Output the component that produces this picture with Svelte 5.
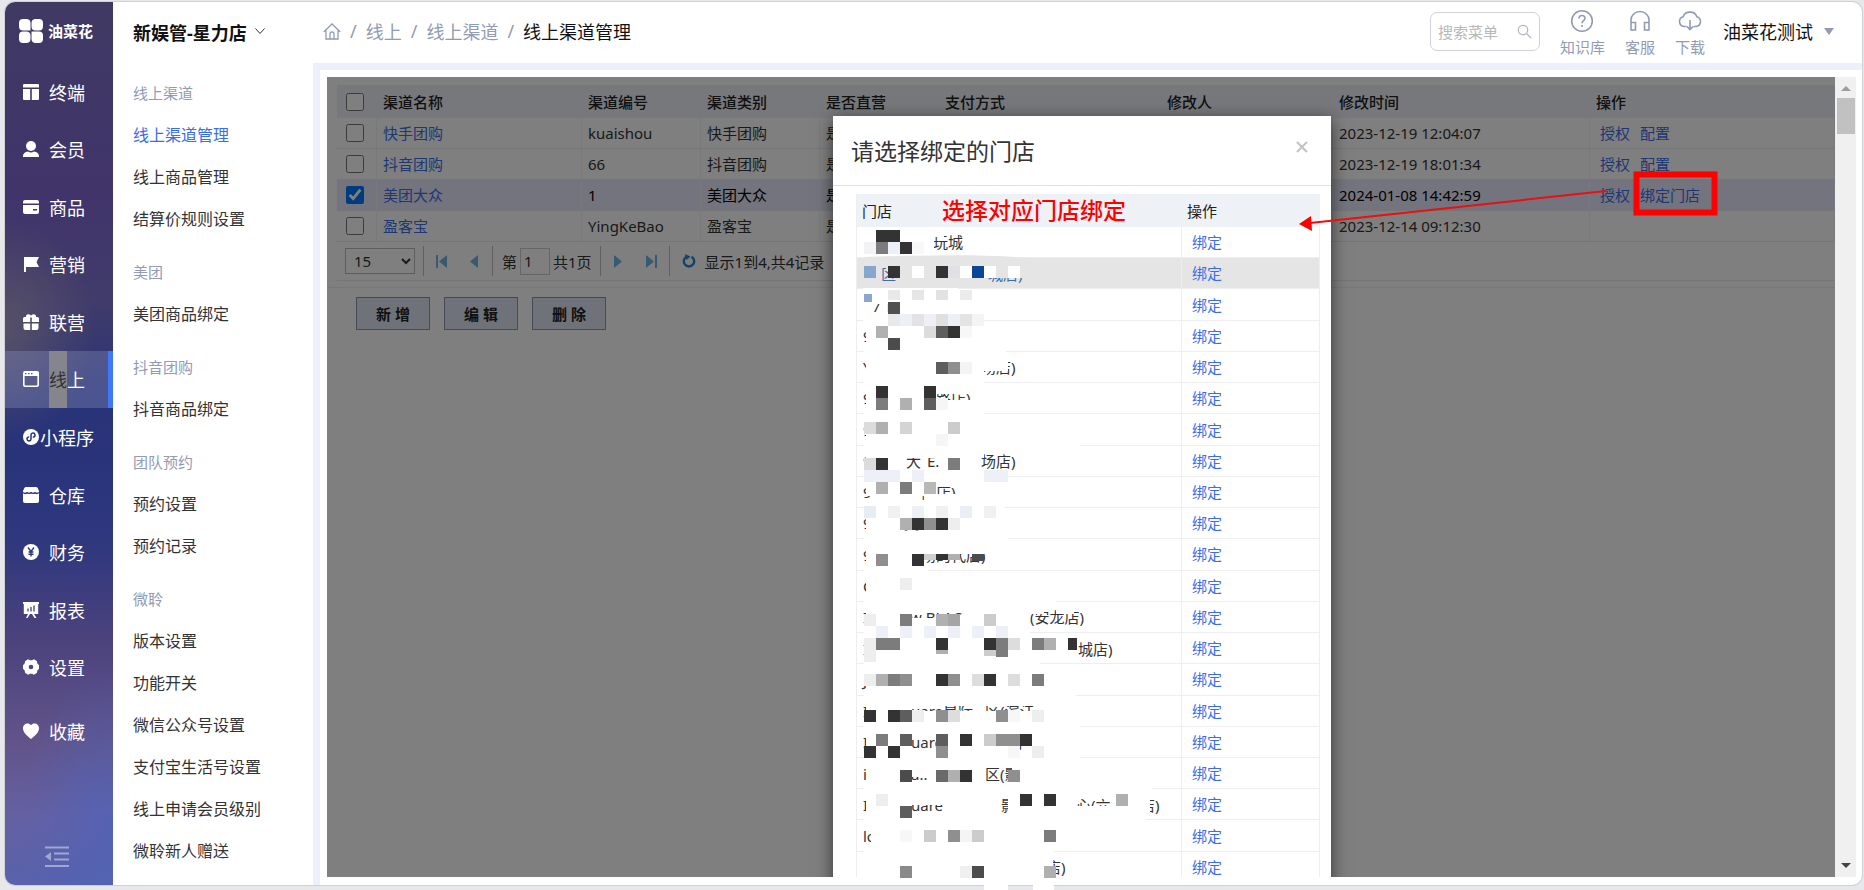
<script>
  const nav = [
    { id: 'terminal', label: '终端' },
    { id: 'member', label: '会员' },
    { id: 'goods', label: '商品' },
    { id: 'marketing', label: '营销' },
    { id: 'joint', label: '联营' },
    { id: 'online', label: '线上', active: true },
    { id: 'mini', label: '小程序' },
    { id: 'warehouse', label: '仓库' },
    { id: 'finance', label: '财务' },
    { id: 'report', label: '报表' },
    { id: 'setting', label: '设置' },
    { id: 'favorite', label: '收藏' }
  ];

  const groups = [
    { title: '线上渠道', items: ['线上渠道管理', '线上商品管理', '结算价规则设置'] },
    { title: '美团', items: ['美团商品绑定'] },
    { title: '抖音团购', items: ['抖音商品绑定'] },
    { title: '团队预约', items: ['预约设置', '预约记录'] },
    { title: '微聆', items: ['版本设置', '功能开关', '微信公众号设置', '支付宝生活号设置', '线上申请会员级别', '微聆新人赠送'] }
  ];

  const headers = ['渠道名称', '渠道编号', '渠道类别', '是否直营', '支付方式', '修改人', '修改时间', '操作'];
  const channels = [
    { name: '快手团购', code: 'kuaishou', type: '快手团购', time: '2023-12-19 12:04:07', ops: ['授权', '配置'] },
    { name: '抖音团购', code: '66', type: '抖音团购', time: '2023-12-19 18:01:34', ops: ['授权', '配置'] },
    { name: '美团大众', code: '1', type: '美团大众', time: '2024-01-08 14:42:59', ops: ['授权', '绑定门店'], checked: true },
    { name: '盈客宝', code: 'YingKeBao', type: '盈客宝', time: '2023-12-14 09:12:30', ops: [] }
  ];

  const stores = Array.from({ length: 21 }, (_, i) => i);

  // Visible pieces of the store names: x, baseline, text
  const fragments = [
    [933, 248, '玩城'],
    [881, 280, '区', '#3d6db0'],
    [988, 280, '城店)', '#3d6db0'],
    [872, 312, "7 T"],
    [863, 342, '9'],
    [863, 373, 'Y'],
    [981, 373, '场店)'],
    [863, 404, '9'],
    [936, 404, '路店)'],
    [863, 436, '9'],
    [863, 467, '9'],
    [906, 467, '大'],
    [927, 467, 'E.'],
    [981, 467, '场店)'],
    [863, 498, '9'],
    [921, 498, '商店)'],
    [863, 529, '9'],
    [904, 529, '莫'],
    [863, 561, '9'],
    [921, 561, '场的代店)'],
    [863, 592, 'C'],
    [863, 623, 'I'],
    [910, 623, 'w BLAC'],
    [1030, 623, '(安龙店)'],
    [863, 655, 'I'],
    [1078, 655, '城店)'],
    [863, 686, 'J'],
    [863, 717, 'I'],
    [911, 717, 'uare星际'],
    [985, 717, '区(滨江'],
    [863, 748, 'I'],
    [911, 748, 'uare'],
    [1008, 748, '店'],
    [863, 780, 'i'],
    [911, 780, 'a..'],
    [985, 780, '区(影'],
    [863, 811, 'I'],
    [911, 811, 'uare'],
    [1001, 811, '影'],
    [1076, 811, '心(六'],
    [1140, 811, '店)'],
    [863, 842, 'lo'],
    [940, 842, "'"],
    [1046, 873, '店)']
  ];

  // Erased areas: x, y, width, height
  const erased = [
    [863, 231, 71, 24], [930, 231, 14, 6],
    [886, 266, 50, 5], [984, 262, 50, 16],
    [863, 288, 95, 9], [863, 300, 160, 4], [863, 315, 120, 12], [866, 327, 140, 24],
    [864, 349, 142, 8], [866, 360, 118, 18], [984, 358, 24, 13], [864, 380, 120, 7],
    [866, 387, 70, 24], [936, 386, 40, 8], [936, 400, 50, 12], [864, 412, 120, 10],
    [866, 422, 130, 20], [864, 442, 216, 9], [866, 452, 118, 6], [866, 458, 38, 12], [864, 470, 140, 12],
    [866, 482, 60, 14], [924, 482, 30, 5], [924, 494, 40, 8], [864, 502, 140, 16], [866, 518, 36, 14],
    [864, 531, 144, 10], [866, 542, 60, 24], [926, 542, 60, 12], [864, 566, 64, 8],
    [866, 574, 60, 24], [864, 598, 192, 8], [866, 606, 44, 24], [910, 618, 120, 10],
    [1030, 606, 14, 8], [1056, 606, 18, 8], [864, 626, 166, 12], [866, 638, 210, 22],
    [864, 661, 176, 8], [867, 669, 210, 26], [864, 691, 212, 8], [866, 699, 46, 22],
    [911, 699, 130, 7], [911, 711, 150, 12], [864, 723, 216, 10], [866, 733, 44, 26], [936, 733, 70, 26],
    [864, 755, 216, 8], [866, 763, 44, 24], [911, 763, 40, 14], [1012, 763, 20, 24],
    [864, 786, 288, 8], [866, 794, 44, 24], [911, 794, 40, 11], [950, 794, 50, 24],
    [1008, 794, 68, 24], [1076, 794, 64, 5], [1076, 806, 64, 12], [1140, 794, 10, 24],
    [864, 818, 282, 8], [871, 826, 200, 22], [864, 848, 190, 12], [863, 860, 190, 18],
    [984, 884, 24, 6], [1033, 884, 21, 6]
  ];

  // Mosaic tiles on a 12px grid: top edge, then [column, shade, height]
  const tint = '#edf0f7';
  const mosaic = [
    [230, [[1, '#333'], [2, '#333']]],
    [242, [[0, '#f3f3f5'], [1, '#7c7c7c'], [2, tint], [3, '#333'], [4, '#f8f8f8']]],
    [266, [[0, '#86a6cc'], [2, '#333'], [4, '#fff'], [6, '#333'], [7, '#dfe1e4'], [8, '#fff'], [9, '#0b4595'], [10, '#fff'], [12, '#fff']]],
    [290, [[2, '#e9e9e9'], [4, '#e6e6e6'], [6, '#e2e2e2'], [8, '#ebebeb']]],
    [302, [[2, '#505050']]],
    [314, [[2, '#e9e9ec'], [3, tint], [4, '#e3e3e6'], [5, tint], [6, '#e0e0e3'], [7, tint], [8, '#e4e4e6'], [9, '#f4f4f5']]],
    [326, [[1, '#b1b1b1'], [5, '#dcdcdc'], [6, '#5e5e5e'], [7, '#333'], [8, '#f7f7f7']]],
    [338, [[2, '#4c4c4c']]],
    [362, [[6, '#5e5e5e'], [7, '#8f8f8f'], [8, '#f4f4f4']]],
    [386, [[1, '#333'], [5, '#333']]],
    [398, [[1, '#7c7c7c'], [3, '#b0b0b0'], [5, '#5e5e5e'], [6, '#f6f6f6']]],
    [422, [[0, '#dcdcdc'], [1, '#b0b0b0'], [3, '#d4d4d4'], [7, '#ccc']]],
    [434, [[6, '#f6f6f6']]],
    [458, [[0, '#dcdcdc'], [1, '#333'], [7, '#7c7c7c']]],
    [470, [[0, tint], [1, tint], [2, tint], [4, tint], [10, tint], [11, tint]]],
    [482, [[1, '#b0b0b0'], [3, '#7c7c7c'], [5, '#b8b8b8']]],
    [506, [[0, '#e8ecf5'], [2, '#f1f1f4'], [4, tint], [6, '#f1f1f4'], [8, '#e9eef7'], [10, '#f1f1f4']]],
    [518, [[3, '#b0b0b0'], [4, '#333'], [5, '#8f8f8f'], [6, '#333'], [7, '#eee']]],
    [554, [[1, '#8f8f8f'], [4, '#333'], [5, '#d0d0d0', 6], [6, '#333', 6], [7, '#b0b0b0', 6], [9, '#4c4c4c', 7]]],
    [578, [[3, '#eee']]],
    [614, [[0, '#eee'], [3, '#7c7c7c'], [6, '#b0b0b0'], [7, '#a5a5a5'], [10, '#ccc']]],
    [626, [[1, tint], [3, tint], [5, tint], [7, tint], [9, tint], [11, tint]]],
    [638, [[0, '#eee'], [1, '#7c7c7c'], [2, '#7c7c7c'], [6, '#333'], [10, '#333'], [11, '#7c7c7c'], [12, '#ddd'], [14, '#7c7c7c'], [15, '#b0b0b0'], [17, '#333']]],
    [650, [[0, '#eee'], [6, '#b0b0b0', 4], [10, '#ccc', 6], [11, '#7c7c7c', 7]]],
    [674, [[0, '#eee'], [1, '#b0b0b0'], [2, '#7c7c7c'], [3, '#8f8f8f'], [6, '#333'], [7, '#8f8f8f'], [9, '#ddd'], [10, '#333'], [12, '#ddd'], [14, '#7c7c7c']]],
    [710, [[0, '#333'], [2, '#333'], [3, '#5e5e5e'], [4, '#eee'], [6, '#8f8f8f'], [7, '#ddd'], [11, '#8f8f8f'], [12, '#f7f7f7'], [14, '#eee']]],
    [734, [[1, '#7c7c7c'], [3, '#5e5e5e'], [6, '#5e5e5e'], [8, '#333'], [10, '#ccc'], [11, '#8f8f8f'], [12, '#8f8f8f'], [13, '#333']]],
    [746, [[0, '#333'], [2, '#333'], [6, '#8f8f8f'], [12, '#f7f7f7'], [14, '#eee']]],
    [770, [[3, '#4c4c4c'], [6, '#6a6a6a'], [7, '#b0b0b0'], [8, '#333'], [12, '#8f8f8f']]],
    [794, [[1, '#eee'], [13, '#333'], [15, '#333'], [21, '#b0b0b0']]],
    [806, [[3, '#5e5e5e']]],
    [830, [[3, '#f7f7f7'], [5, '#ccc'], [7, '#8f8f8f'], [8, '#f4f4f4'], [9, '#ccc'], [15, '#7c7c7c']]],
    [866, [[3, '#8a8a8a'], [8, '#f0f0f0'], [9, '#4c4c4c'], [15, '#b0b0b0', 12]]]
  ];
</script>

{#snippet navIcon(id)}
  <svg class="nav-icon" viewBox="0 0 16 16" fill="#fff" aria-hidden="true">
    {#if id === 'terminal'}
      <path d="M1 0h14a1 1 0 0 1 1 1v2.600H0V1a1 1 0 0 1 1-1zM0 5h7.200v11H1a1 1 0 0 1-1-1zM8.800 5H16v10a1 1 0 0 1-1 1H8.800z" />
    {:else if id === 'member'}
      <circle cx="8" cy="5" r="5" /><path d="M0 16c0-4 2-5 5-5.500 2 1.200 4 1.200 6 0 3 .5 5 1.500 5 5.500z" />
    {:else if id === 'goods'}
      <path d="M2 1h12a2 2 0 0 1 2 2v1.400H0V3a2 2 0 0 1 2-2zM0 6h16v7a2 2 0 0 1-2 2H2a2 2 0 0 1-2-2zm10 4v1.500h4V10z" fill-rule="evenodd" />
    {:else if id === 'marketing'}
      <path d="M1 1h15l-2.500 5 2.500 5H3v5H1z" />
    {:else if id === 'joint'}
      <path d="M3 3c-.5-2 1.500-3.500 3.500-2.500L8 1.500 9.500.5c2-1 4 .5 3.500 2.500h1.500A1.500 1.500 0 0 1 16 4.500V8H8.800V3.500H7.200V8H0V4.500A1.500 1.500 0 0 1 1.500 3zM.5 9.500h6.700V16H2.500a2 2 0 0 1-2-2zM8.800 9.500h6.700V14a2 2 0 0 1-2 2H8.800z" />
    {:else if id === 'online'}
      <path d="M2 0h12a2 2 0 0 1 2 2v12a2 2 0 0 1-2 2H2a2 2 0 0 1-2-2V2a2 2 0 0 1 2-2zM1.600 5v8.400a1 1 0 0 0 1 1h10.800a1 1 0 0 0 1-1V5zM2 2v1.300h1.500V2zm3 0v1.300h1.500V2zm3 0v1.300h1.500V2z" fill-rule="evenodd" />
    {:else if id === 'mini'}
      <circle cx="8" cy="8" r="8" />
      <path d="M8 10V6a2 2 0 1 1 2.400 2M8 6v4a2 2 0 1 1-2.400-2" fill="none" stroke="#28347a" stroke-width="1.500" stroke-linecap="round" />
    {:else if id === 'warehouse'}
      <path d="M3 0h10a2 2 0 0 1 1.700 1L16 4v10a2 2 0 0 1-2 2H2a2 2 0 0 1-2-2V4l1.300-3A2 2 0 0 1 3 0z" />
      <path d="M0 5.500c1.500 1.500 3 1 4 0 1.500 1.300 2.800 1.300 4 0 1.500 1.300 2.800 1.300 4 0 1 1 2.500 1.500 4 0" fill="none" stroke="#2b367b" stroke-width="1.200" />
    {:else if id === 'finance'}
      <circle cx="8" cy="8" r="8" />
      <path d="M5 3.500l3 4 3-4M8 7.500v5M5.500 8h5M5.500 10.300h5" fill="none" stroke="#30387e" stroke-width="1.400" />
    {:else if id === 'report'}
      <path d="M0 0h16v2h-.8v10H.8V2H0zM5 12l2 0-2.500 4H3zM9 12l2 0 2.500 4H11.500z" />
      <path d="M5 6.500v3M8 5v4.500M11 3.500v6" stroke="#40407a" stroke-width="1.300" />
    {:else if id === 'setting'}
      <path d="M5 .3l2 1h2l2-1 3 2 .2 2L16 6.300v3.400l-1.800 2-.2 2-3 2-2-1H7l-2 1-3-2-.2-2L0 9.700V6.300l1.800-2 .2-2z" />
      <circle cx="8" cy="8" r="2.300" fill="#50467d" />
    {:else}
      <path d="M8 16C4 13 0 9.500 0 5.300 0 .5 5.500-1 8 2.300 10.500-1 16 .5 16 5.300 16 9.500 12 13 8 16z" />
    {/if}
  </svg>
{/snippet}

<div class="page">
  <div class="frame">
    <aside class="sidebar">
      <div class="logo">
        <svg viewBox="0 0 24 24" fill="#fff" aria-hidden="true">
          <path d="M4 0h4a4 4 0 0 1 3.500 4v7.500H4A4 4 0 0 1 0 8V4a4 4 0 0 1 4-4zM16 0h4a4 4 0 0 1 4 4v4a4 4 0 0 1-4 3.500h-3.500a4 4 0 0 1-4-4V4A4 4 0 0 1 16 0zM4 12.500h4a4 4 0 0 1 3.500 4V20A4 4 0 0 1 8 24H4a4 4 0 0 1-4-4v-3.500a4 4 0 0 1 4-4zM12.500 12.500H20a4 4 0 0 1 4 4V20a4 4 0 0 1-4 4h-4a4 4 0 0 1-3.500-4z" />
        </svg>
        <b>油菜花</b>
      </div>
      <nav class="nav">
        {#each nav as item}
          <a href="#{item.id}" class:active={item.active}>
            {@render navIcon(item.id)}
            <span>{#if item.active}<mark>线</mark>上{:else}{item.label}{/if}</span>
          </a>
        {/each}
      </nav>
      <button class="fold" aria-label="收起菜单">
        <svg viewBox="0 0 24 22" fill="none" stroke="#9fa6d2" stroke-width="2" aria-hidden="true">
          <path d="M0 1.500h24M9 7.500h15M9 13.500h15M0 20h24" /><path d="M6 6v9L0 10.500z" fill="#9fa6d2" stroke="none" />
        </svg>
      </button>
    </aside>

    <div class="submenu">
      <button class="shop">新娱管-星力店
        <svg viewBox="0 0 10 7" fill="none" stroke="#333" aria-hidden="true"><path d="M.5.5l4.500 5 4.500-5" /></svg>
      </button>
      {#each groups as group}
        <section>
          <h2>{group.title}</h2>
          {#each group.items as item}
            <a href="#menu" class:current={item === '线上渠道管理'}>{item}</a>
          {/each}
        </section>
      {/each}
    </div>

    <div class="main">
      <header>
        <nav class="crumbs" aria-label="breadcrumb">
          <svg viewBox="0 0 18 17" fill="none" stroke="#929bb3" stroke-width="1.300" aria-hidden="true">
            <path d="M.7 9L9 1l8.300 8M3 7.500v8.500h12V7.500M7 16v-5a2 2 0 0 1 4 0v5" />
          </svg>
          <i>/</i><a href="#online">线上</a><i>/</i><a href="#channel">线上渠道</a><i>/</i><b>线上渠道管理</b>
        </nav>
        <label class="search">
          <input type="text" placeholder="搜索菜单" aria-label="搜索菜单" />
          <svg viewBox="0 0 15 15" fill="none" stroke="#b4b7bf" stroke-width="1.300" aria-hidden="true"><circle cx="6" cy="6" r="4.700" /><path d="M9.500 9.500l4.500 4.500" /></svg>
        </label>
        <div class="tools">
          <a href="#help">
            <svg viewBox="0 0 24 24" fill="none" stroke="#929bb3" stroke-width="1.600" aria-hidden="true"><circle cx="12" cy="12" r="10.300" /><path d="M9 9.500c0-4 6-4 6-.3 0 2.300-3 2.500-3 5M12 16v2" /></svg>
            知识库</a>
          <a href="#service">
            <svg viewBox="0 0 24 24" fill="none" stroke="#929bb3" stroke-width="1.600" aria-hidden="true"><path d="M3 20.500V11a9 8.500 0 0 1 18 0v9.500M3 13.500h4.500v7.500H3zM16.500 13.500H21v7.500h-4.500z" /></svg>
            客服</a>
          <a href="#download">
            <svg viewBox="0 0 24 24" fill="none" stroke="#929bb3" stroke-width="1.600" aria-hidden="true"><path d="M8.500 17.500H6a5 5 0 0 1-.8-9.800 7 6 0 0 1 13.600 0A5 5 0 0 1 18 17.500h-2.500M12 11v9.500M9 17.500l3 3 3-3" /></svg>
            下载</a>
        </div>
        <button class="user">油菜花测试<svg viewBox="0 0 10 7" aria-hidden="true"><path d="M0 0h10L5 7z" fill="#929bb3" /></svg></button>
      </header>

      <div class="content">
        <div class="workspace">
          <table class="channels">
            <colgroup><col class="c0" /><col class="c1" /><col class="c2" /><col class="c2" /><col class="c2" /><col class="c3" /><col class="c4" /><col class="c5" /><col /></colgroup>
            <thead>
              <tr><th><input type="checkbox" aria-label="全选" /></th>{#each headers as h}<th>{h}</th>{/each}</tr>
            </thead>
            <tbody>
              {#each channels as c}
                <tr class:selected={c.checked}>
                  <td><input type="checkbox" checked={c.checked} aria-label={c.name} /></td>
                  <td><a href="#edit">{c.name}</a></td>
                  <td>{c.code}</td><td>{c.type}</td><td>是</td><td></td><td></td><td>{c.time}</td>
                  <td><div class="ops">{#each c.ops as op}<a href="#op">{op}</a>{/each}</div></td>
                </tr>
              {/each}
            </tbody>
          </table>
          <div class="pager">
            <select aria-label="每页条数"><option>15</option></select>
            <span class="steps">
              <svg viewBox="0 0 11 13" aria-hidden="true"><path d="M0 0h2v13H0zM11 0v13L3 6.500z" /></svg>
              <svg viewBox="0 0 11 13" aria-hidden="true"><path d="M9 0v13L1 6.500z" /></svg>
            </span>
            <label class="pageno">第<input type="text" value="1" />共1页</label>
            <span class="steps next">
              <svg viewBox="0 0 11 13" aria-hidden="true"><path d="M1 0v13l8-6.500z" /></svg>
              <svg viewBox="0 0 11 13" aria-hidden="true"><path d="M9 0h2v13H9zM0 0v13l8-6.500z" /></svg>
            </span>
            <svg class="refresh" viewBox="0 0 14 14" fill="none" stroke="#2b87d0" stroke-width="2.400" aria-hidden="true"><path d="M9.500 2.700a5.200 5.200 0 1 1-5 0" /><path d="M3 0l5.500 2.400L4.500 6z" fill="#2b87d0" stroke="none" /></svg>
            显示1到4,共4记录
          </div>
          <div class="actions"><button>新 增</button><button>编 辑</button><button>删 除</button></div>

          <div class="shade"></div>

          <div class="dialog" role="dialog" aria-label="请选择绑定的门店">
            <div class="dialog-head">
              <h1>请选择绑定的门店</h1>
              <button aria-label="关闭"><svg viewBox="0 0 12 12" stroke="#c4c4c4" stroke-width="2.200" aria-hidden="true"><path d="M1 1l10 10M11 1L1 11" /></svg></button>
            </div>
            <table class="stores">
              <colgroup><col class="name" /><col /></colgroup>
              <thead><tr><th>门店</th><th>操作</th></tr></thead>
              <tbody>
                {#each stores as i}
                  <tr class:hover={i === 1}><td></td><td><a href="#bind">绑定</a></td></tr>
                {/each}
              </tbody>
            </table>
          </div>
        </div>
        <div class="scrollbar">
          <svg viewBox="0 0 10 5" aria-hidden="true"><path d="M0 5h10L5 0z" fill="#9c9c9c" /></svg>
          <i></i>
          <svg class="down" viewBox="0 0 10 5" aria-hidden="true"><path d="M0 0h10L5 5z" fill="#444" /></svg>
        </div>
      </div>
    </div>
  </div>

  <svg class="notes">
    {#each fragments as [x, y, text, color]}
      <text {x} {y} fill={color ?? '#333'}>{text}</text>
    {/each}
    {#each erased as [x, y, w, h]}
      <rect {x} {y} width={w} height={h} fill={y > 255 && y < 280 ? '#e5e5e5' : '#fff'} />
    {/each}
    <path d="M864 258v-1c60-2 120-3 164 1z" fill="#e5e5e5" />
    {#each mosaic as [y, tiles]}
      {#each tiles as [k, fill, h]}
        <rect x={864 + k * 12} {y} width={k === 17 ? 9 : 12} height={h ?? (y === 290 ? 10 : 12)} {fill} />
      {/each}
    {/each}
    <rect x="864" y="294" width="8" height="8" fill="#8ba7cc" />
    <text class="tip" x="942" y="219">选择对应门店绑定</text>
    <rect x="1636.500" y="174.500" width="78" height="38" fill="none" stroke="#fe0000" stroke-width="6" />
    <path d="M1606 191L1310 223" stroke="#e8110f" stroke-width="2" />
    <path d="M1299 224l12-8 1 15z" fill="#fe0000" />
  </svg>
</div>

<style>
  :global(body) { background: #e6e8eb; overflow: hidden; }
  .page {
    position: relative; box-sizing: border-box; height: 100vh; padding: 2px 2px 5px 5px;
    font-family: "Noto Sans", "Noto Sans CJK SC", sans-serif; font-size: 15px; color: #333;
  }
  a { text-decoration: none; color: inherit; }
  button { font: inherit; color: inherit; border: 0; background: none; padding: 0; }
  svg { display: block; flex: none; }
  .frame { display: flex; height: 100%; border-radius: 10px; overflow: hidden; background: #fff; box-shadow: 0 0 0 1px #cfd1d4; }

  .sidebar {
    width: 108px; flex: none; display: flex; flex-direction: column; color: #fff;
    background:
      radial-gradient(ellipse 90px 160px at 100% 93%, rgba(75, 100, 190, .6), transparent),
      radial-gradient(ellipse 90px 110px at 0 37%, rgba(96, 88, 104, .75), transparent),
      linear-gradient(#3f3963 0, #41346a 22%, #403c6a 34%, #2a3377 44%, #28347a 52%, #30387e 62%, #4b427c 72%, #62548a 84%, #6560a2 92%, #5862ac 100%);
  }
  .logo { display: flex; align-items: center; gap: 5px; height: 61px; padding: 0 0 3px 14px; padding-bottom: 3px; box-sizing: border-box; }
  .logo svg { width: 24px; height: 24px; margin-bottom: 3px; margin-top: 3px; margin-top: 3px; }
  .logo b { font-size: 15px; line-height: 24px; }
  .logo { padding-bottom: 4px; }
  .nav { display: grid; grid-template-rows: repeat(11, 1fr) 69px; height: 702px; font-size: 18px; }
  .nav a { display: flex; align-items: center; padding-left: 18px; }
  .nav a.active { background: rgba(140, 150, 190, .35); border-right: 5px solid #3f78fb; }
  .nav-icon { width: 16px; height: 16px; }
  .nav span { width: 54px; margin-left: 1px; white-space: nowrap; display: flex; justify-content: center; }
  .nav a.active span { align-self: stretch; align-items: center; }
  mark { background: #85858d; color: #333; align-self: stretch; display: flex; align-items: center; }
  .fold { margin: auto 0 17px 40px; width: 24px; }
  .fold svg { width: 24px; height: 22px; }

  .submenu { width: 200px; flex: none; box-sizing: border-box; padding-left: 20px; }
  .shop { display: flex; align-items: center; gap: 8px; box-sizing: border-box; height: 59px; font-size: 18px; font-weight: 700; color: #111; white-space: nowrap; }
  .shop svg { width: 10px; height: 7px; }
  section { margin-top: 12px; }
  h2 { margin: 0; font-size: 15px; font-weight: 400; line-height: 41px; color: #929bb3; }
  section a { display: block; font-size: 16px; line-height: 42px; white-space: nowrap; }
  section a.current { color: #3a6ee8; }

  .main { flex: 1; min-width: 0; display: flex; flex-direction: column; }
  header { display: flex; height: 61px; flex: none; padding: 0 28px 0 10px; }
  .crumbs { display: flex; align-items: center; gap: 9px; flex: 1; padding-bottom: 3px; font-size: 18px; color: #929bb3; white-space: nowrap; }
  .crumbs svg { width: 18px; height: 17px; }
  .crumbs i { font-style: normal; }
  .crumbs b { font-weight: 400; color: #111; }
  .search { display: flex; align-items: center; box-sizing: border-box; width: 110px; height: 39px; margin-top: 10px; padding: 0 7px; border: 1px solid #cfd2d8; border-radius: 7px; }
  .search input { flex: 1; min-width: 0; border: 0; outline: 0; padding: 0; font: inherit; background: none; }
  .search input::placeholder { color: #b8b8b8; opacity: 1; }
  .search svg { width: 15px; height: 15px; }
  .tools { display: flex; gap: 20px; margin-left: 20px; color: #929bb3; }
  .tools a { display: flex; flex-direction: column; align-items: center; padding-top: 7px; line-height: 29px; }
  .tools svg { width: 24px; height: 24px; }
  .user { display: flex; align-items: center; gap: 11px; margin-left: 18px; padding-bottom: 3px; font-size: 18px; color: #111; white-space: nowrap; }
  .user svg { width: 10px; height: 7px; }

  .content { flex: 1; min-height: 0; display: flex; padding: 7px 6px 8px 7px; border-style: solid; border-color: #ecf0fb; border-width: 7px 0 0 7px; }
  .workspace { position: relative; flex: 1; min-width: 0; overflow: hidden; background: #fff; }
  .shade { position: absolute; inset: 0; background: rgba(0, 0, 0, .5); }
  table { border-collapse: separate; border-spacing: 0; table-layout: fixed; }
  th { font-weight: 400; text-align: left; color: #222; }
  .channels { width: calc(100% - 10px); margin: 8px 0 0 10px; }
  .c0 { width: 40px; } .c1 { width: 205px; } .c2 { width: 119px; } .c3 { width: 222px; } .c4 { width: 172px; } .c5 { width: 257px; }
  .channels th, .channels td { box-sizing: border-box; padding: 0 6px; line-height: 30px; height: 31px; white-space: nowrap; }
  .channels th { height: 33px; background: #eef1f7; font-weight: 500; }
  .channels td { border-bottom: 1px solid #e9ebee; border-right: 1px solid #f1f2f4; }
  .channels a { color: #3a6ee8; }
  .channels .selected td { background: #e9e9fc; color: #000; }
  .channels input { display: block; width: 18px; height: 18px; margin: 0 0 0 3px; }
  .ops { display: flex; gap: 10px; padding-left: 4px; }
  .pager { display: flex; align-items: center; height: 38px; margin-left: 10px; padding-left: 8px; border-bottom: 1px solid #e9ebee; white-space: nowrap; }
  .pager select { width: 70px; height: 26px; padding: 0 4px; font: inherit; color: inherit; background: #fff; border: 1px solid #bbb; }
  .steps { display: flex; align-items: center; gap: 22px; height: 30px; margin-left: 8px; padding: 0 12px; border: solid #c0c0c0; border-width: 0 1px; }
  .steps svg { width: 11px; height: 13px; fill: #6fb6dc; }
  .pageno { display: flex; align-items: center; gap: 3px; padding-left: 9px; }
  .pageno input { box-sizing: border-box; width: 30px; height: 27px; padding: 0 3px; font: inherit; color: inherit; border: 1px solid #ccc; }
  .refresh { width: 14px; height: 14px; margin: 0 9px 0 12px; }
  .actions { display: flex; gap: 14px; margin-top: 6px; padding: 9px 0 0 29px; border-top: 1px solid #f0f1f3; }
  .actions button { width: 74px; height: 33px; border: 1px solid #8a95ac; background: #dfe6f2; font-weight: 700; color: #222; }

  .dialog { position: absolute; left: 506px; top: 39px; bottom: 0; width: 498px; overflow: hidden; background: #fff; }
  .shade::after { content: ""; position: absolute; left: 506px; top: 39px; bottom: -20px; width: 498px; box-shadow: 0 4px 16px rgba(0, 0, 0, .6); }
  .dialog-head { display: flex; justify-content: space-between; align-items: center; height: 69px; padding: 0 23px 0 18px; border-bottom: 1px solid #dfe2e5; }
  h1 { margin: 0; font-size: 23px; font-weight: 400; line-height: 34px; }
  .dialog-head button { padding-bottom: 8px; }
  .dialog-head svg { width: 12px; height: 12px; }
  .stores { width: 464px; height: 689px; margin: 8px 0 0 23px; border-left: 1px solid #eceef0; }
  .stores .name { width: 325px; }
  .stores th { height: 33px; padding: 0 5px; background: #eef1f6; box-sizing: border-box; }
  .stores td { padding: 0 10px; line-height: 22px; border-right: 1px solid #eceef0; border-bottom: 1px solid #eceef0; }
  .stores a { color: #3a6ee8; }
  .hover td { background: #e5e5e5; }

  .scrollbar { width: 21px; display: flex; flex-direction: column; align-items: center; background: #f0f0f0; }
  .scrollbar svg { width: 10px; height: 5px; margin: 9px 0 7px; }
  .scrollbar i { width: 18px; height: 36px; background: #c1c1c1; }
  .scrollbar .down { margin-top: auto; margin-bottom: 9px; }

  .notes { position: absolute; left: 0; top: 0; width: 100%; height: 100%; pointer-events: none; }
  .notes .tip { font-size: 23px; font-weight: 500; fill: #fe0000; }
</style>
